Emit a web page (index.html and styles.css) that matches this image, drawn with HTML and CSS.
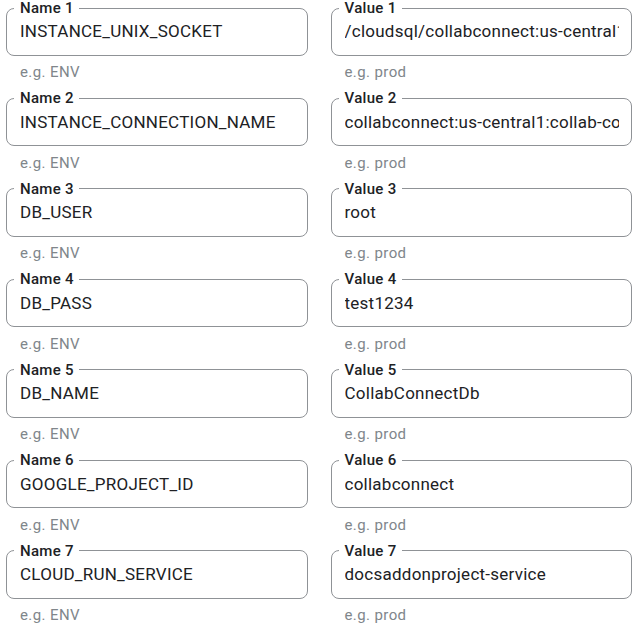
FILE: index.html
```html
<!DOCTYPE html>
<html lang="en">
<head>
<meta charset="utf-8">
<title>Environment variables</title>
<link rel="stylesheet" href="styles.css">
</head>
<body>
<div class="grid">
  <div class="cell"><fieldset class="field"><legend class="label">Name 1</legend><div class="value">INSTANCE_UNIX_SOCKET</div></fieldset><div class="hint">e.g. ENV</div></div>
  <div class="cell"><fieldset class="field"><legend class="label">Value 1</legend><div class="value">/cloudsql/collabconnect:us-central1:collab-connect-db</div></fieldset><div class="hint">e.g. prod</div></div>
  <div class="cell"><fieldset class="field"><legend class="label">Name 2</legend><div class="value">INSTANCE_CONNECTION_NAME</div></fieldset><div class="hint">e.g. ENV</div></div>
  <div class="cell"><fieldset class="field"><legend class="label">Value 2</legend><div class="value">collabconnect:us-central1:collab-connect-db</div></fieldset><div class="hint">e.g. prod</div></div>
  <div class="cell"><fieldset class="field"><legend class="label">Name 3</legend><div class="value">DB_USER</div></fieldset><div class="hint">e.g. ENV</div></div>
  <div class="cell"><fieldset class="field"><legend class="label">Value 3</legend><div class="value">root</div></fieldset><div class="hint">e.g. prod</div></div>
  <div class="cell"><fieldset class="field"><legend class="label">Name 4</legend><div class="value">DB_PASS</div></fieldset><div class="hint">e.g. ENV</div></div>
  <div class="cell"><fieldset class="field"><legend class="label">Value 4</legend><div class="value">test1234</div></fieldset><div class="hint">e.g. prod</div></div>
  <div class="cell"><fieldset class="field"><legend class="label">Name 5</legend><div class="value">DB_NAME</div></fieldset><div class="hint">e.g. ENV</div></div>
  <div class="cell"><fieldset class="field"><legend class="label">Value 5</legend><div class="value">CollabConnectDb</div></fieldset><div class="hint">e.g. prod</div></div>
  <div class="cell"><fieldset class="field"><legend class="label">Name 6</legend><div class="value">GOOGLE_PROJECT_ID</div></fieldset><div class="hint">e.g. ENV</div></div>
  <div class="cell"><fieldset class="field"><legend class="label">Value 6</legend><div class="value">collabconnect</div></fieldset><div class="hint">e.g. prod</div></div>
  <div class="cell"><fieldset class="field"><legend class="label">Name 7</legend><div class="value">CLOUD_RUN_SERVICE</div></fieldset><div class="hint">e.g. ENV</div></div>
  <div class="cell"><fieldset class="field"><legend class="label">Value 7</legend><div class="value">docsaddonproject-service</div></fieldset><div class="hint">e.g. prod</div></div>
</div>
</body>
</html>
```
FILE: styles.css
```css
html, body {
  margin: 0;
  padding: 0;
  background: #ffffff;
}

body {
  font-family: Roboto, "Liberation Sans", Arial, sans-serif;
  color: #202124;
}

.grid {
  display: grid;
  grid-template-columns: 1fr 1fr;
  column-gap: 23px;
  row-gap: 9.3px;
  padding: 0 8px 0 6px;
}

.cell {
  display: flex;
  flex-direction: column;
  min-width: 0;
}

.field {
  margin: 0;
  padding: 5.4px 12px 13.6px 13px;
  border: 1px solid #8f9296;
  border-radius: 8px;
  min-width: 0;
}

.label {
  margin-left: -6px;
  padding: 0 5px 0 6px;
  font-size: 15px;
  line-height: 16px;
  font-weight: 500;
  letter-spacing: 0.3px;
  color: #202124;
}

.value {
  font-size: 17px;
  line-height: 20px;
  letter-spacing: 0.25px;
  color: #202124;
  white-space: nowrap;
  overflow: hidden;
}

.hint {
  margin-top: 7.2px;
  padding-left: 14px;
  font-size: 15px;
  line-height: 18px;
  letter-spacing: 0.4px;
  color: #80868b;
}
```
